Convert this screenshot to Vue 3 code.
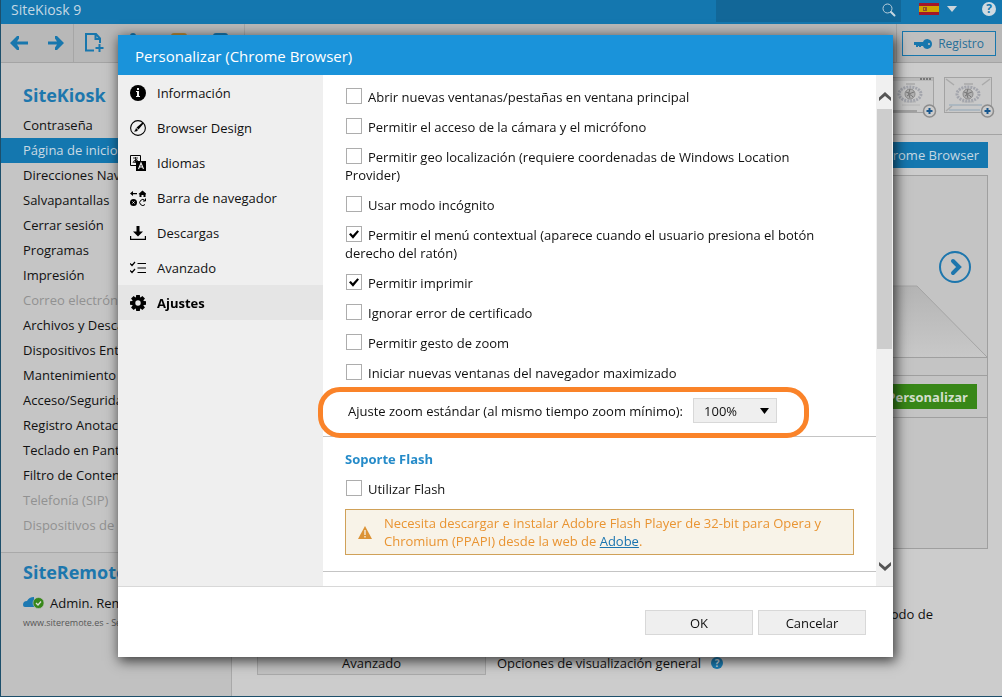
<script setup>
import { ref } from 'vue'

const menu = [
  { label: 'Contraseña' },
  { label: 'Página de inicio', active: true },
  { label: 'Direcciones Navegador' },
  { label: 'Salvapantallas' },
  { label: 'Cerrar sesión' },
  { label: 'Programas' },
  { label: 'Impresión' },
  { label: 'Correo electrónico', disabled: true },
  { label: 'Archivos y Descargas' },
  { label: 'Dispositivos Entrada' },
  { label: 'Mantenimiento' },
  { label: 'Acceso/Seguridad' },
  { label: 'Registro Anotaciones' },
  { label: 'Teclado en Pantalla' },
  { label: 'Filtro de Contenido' },
  { label: 'Telefonía (SIP)', disabled: true },
  { label: 'Dispositivos de pago', disabled: true },
]

const sections = [
  { id: 'info', label: 'Información' },
  { id: 'design', label: 'Browser Design' },
  { id: 'lang', label: 'Idiomas' },
  { id: 'bar', label: 'Barra de navegador' },
  { id: 'down', label: 'Descargas' },
  { id: 'adv', label: 'Avanzado' },
  { id: 'gear', label: 'Ajustes', active: true },
]

const options = ref([
  { label: 'Abrir nuevas ventanas/pestañas en ventana principal', on: false },
  { label: 'Permitir el acceso de la cámara y el micrófono', on: false },
  { label: 'Permitir geo localización (requiere coordenadas de Windows Location Provider)', on: false },
  { label: 'Usar modo incógnito', on: false },
  { label: 'Permitir el menú contextual (aparece cuando el usuario presiona el botón derecho del ratón)', on: true },
  { label: 'Permitir imprimir', on: true },
  { label: 'Ignorar error de certificado', on: false },
  { label: 'Permitir gesto de zoom', on: false },
  { label: 'Iniciar nuevas ventanas del navegador maximizado', on: false },
])
const flash = ref(false)
const zoom = ref('100%')
const teeth = [0, 45, 90, 135, 180, 225, 270, 315]
</script>

<template>
  <div class="app">
    <header class="titlebar">
      <h1>SiteKiosk 9</h1>
      <div class="search">
        <input type="search" aria-label="Buscar" />
        <svg width="14" height="14" viewBox="0 0 14 14"><circle cx="5.500" cy="5.500" r="4.500" fill="none" stroke="#b9cedb" stroke-width="1" /><path d="M9 9l3.500 3.500" stroke="#c5d6e0" stroke-width="2" stroke-linecap="round" /></svg>
      </div>
      <button class="lang" aria-label="Idioma">
        <svg width="20" height="12" viewBox="0 0 20 12"><path fill="#a3172a" d="M0 0h20v12H0z" /><path fill="#cfa500" d="M0 3h20v6H0z" /><path fill="#93502c" d="M4 4h4v4H4z" /><path fill="#cfa500" d="M5 5h1v2H5z" /></svg>
        <svg width="10" height="6" viewBox="0 0 10 6"><path fill="#cdd5da" d="M0 0h10L5 6z" /></svg>
      </button>
      <button class="help" aria-label="Ayuda">?</button>
    </header>

    <div class="toolbar">
      <div class="group nav">
        <button aria-label="Atrás"><svg width="18" height="16" viewBox="0 0 18 16"><path d="M0 8L7 1h2v2.500L7 6.500h11v3H7l2 3V15H7z" fill="#1877ad" /></svg></button>
        <button aria-label="Adelante"><svg width="18" height="16" viewBox="0 0 18 16"><path d="M17 8L10 1H8v2.500l2 3H1v3h9l-2 3V15h2z" fill="#1877ad" /></svg></button>
      </div>
      <div class="group files">
        <button aria-label="Nuevo"><svg width="19" height="20" viewBox="0 0 19 20"><path d="M9 17.500H1V1h10l4 4.500V10M10.500 1v5H15" fill="none" stroke="#1877ad" stroke-width="2" /><path d="M14.500 11v8M10.500 15h8" stroke="#1877ad" stroke-width="2" /></svg></button>
        <button aria-label="Abrir"><svg width="18" height="20" viewBox="0 0 18 20"><path d="M2 3q0-3 3-3 3 0 3 3v9H2z" fill="#1877ad" /></svg></button>
        <button aria-label="Carpeta"><svg width="18" height="20" viewBox="0 0 18 20"><path d="M1 3Q1 0 4 0h10q3 0 3 3v14H1z" fill="#b48a3a" /></svg></button>
        <button aria-label="Guardar"><svg width="18" height="20" viewBox="0 0 18 20"><path d="M1 3Q1 0 4 0h9q3 0 3 3v14H1z" fill="#1877ad" /></svg></button>
      </div>
      <div class="register">
        <button>
          <svg width="18" height="10" viewBox="0 0 18 10"><path d="M0 3h9q1-3 4.500-3Q18 1 18 5t-4.500 5Q10 10 9 7H7v1H5V7H4v1H2V6H0z" fill="#1877ad" /><circle cx="15" cy="5" r="1.100" fill="#bbb" /></svg>
          Registro
        </button>
      </div>
    </div>

    <div class="work">
      <nav class="sidebar">
        <h2>SiteKiosk</h2>
        <a v-for="m in menu" :key="m.label" href="#" :class="{ active: m.active, disabled: m.disabled }">{{ m.label }}</a>
        <section class="remote">
          <h2>SiteRemote</h2>
          <a href="#" class="admin">
            <svg width="21" height="12" viewBox="0 0 21 12"><path d="M0 8q0-4 4-4Q6 0 11 0v10H2Q0 10 0 8z" fill="#1d79b2" /><circle cx="15.500" cy="6" r="5.500" fill="#37871a" stroke="#c2c2c2" stroke-width=".6" /><path d="M13 6l2 2 3-3.500" fill="none" stroke="#ddd" stroke-width="1.300" /></svg>
            Admin. Remota
          </a>
          <small>www.siteremote.es - Servicio</small>
        </section>
      </nav>

      <main class="main">
        <div class="thumbs">
          <button v-for="n in 2" :key="n" :aria-label="'Añadir vista ' + n">
            <svg width="54" height="46" viewBox="0 0 54 46">
              <rect x=".5" y=".5" width="47" height="35" fill="#c9c9c9" stroke="#a3a3a3" />
              <g v-if="n === 1" fill="#777"><path d="M1 1h46v3H1z" fill="#b9b9b9" /><path d="M34 1h2v2h-2zM37 1h2v2h-2zM40 1h2v2h-2zM43 1h2v2h-2z" /><path d="M1 33h30v2H1z" fill="#a0a0a0" /></g>
              <g v-else fill="none"><path d="M2 2l8 6M46 2l-8 6M2 34l6-5" stroke="#aaa" stroke-width="1.500" /><path d="M5 28h33M5 33h31" stroke="#8fa6b8" /></g>
              <path d="M20 7h9" stroke="#999" />
              <path d="M18 25h12M16 28h18" stroke="#b4b4b4" />
              <ellipse cx="24" cy="17" rx="11" ry="7" fill="none" stroke="#a3a5ac" stroke-width="3" stroke-dasharray="2 1" />
              <circle cx="24" cy="17" r="5" fill="#b0b0b0" stroke="#8a8a8a" /><path d="M20 15q4 3 8 0M21 19q3-3 6 1M24 12q-3 5 0 9" fill="none" stroke="#777" />
              <circle cx="43.500" cy="34" r="6" fill="#ccc" stroke="#8c8c8c" stroke-width="1.500" /><path d="M43.500 31v6M40.500 34h6" stroke="#17578e" stroke-width="2" />
            </svg>
          </button>
        </div>
        <div class="content">
          <div class="tabs"><button>Chrome Browser</button></div>
          <div class="panel">
            <div class="preview">
              <svg class="slope" viewBox="0 0 120 72" width="120" height="72">
                <defs><linearGradient id="shade" x2="0" y2="1"><stop stop-color="#b4b4b4" /><stop offset="1" stop-color="#c8c8c8" /></linearGradient></defs>
                <path d="M0 1h50l70 71H0z" fill="url(#shade)" /><path d="M0 1h50l70 71" fill="none" stroke="#a4a4a4" />
              </svg>
              <button class="next" aria-label="Siguiente"><svg width="32" height="32" viewBox="0 0 32 32"><circle cx="16" cy="16" r="15" fill="none" stroke="#1d76ad" stroke-width="2" /><path d="M14 10l6 6-6 6" fill="none" stroke="#1d76ad" stroke-width="4" stroke-linecap="round" /></svg></button>
            </div>
            <div class="strip"></div>
            <div class="action"><button>Personalizar</button></div>
            <div class="blank"></div>
          </div>
          <p class="note">modo de</p>
          <div class="bottom">
            <button>Avanzado</button>
            <span>Opciones de visualización general</span>
            <i>?</i>
          </div>
        </div>
      </main>
    </div>

    <div class="dialog" role="dialog" aria-labelledby="dialog-title">
      <h2 id="dialog-title">Personalizar (Chrome Browser)</h2>
      <div class="body">
        <nav class="sections">
          <a v-for="s in sections" :key="s.id" href="#" :class="{ active: s.active }">
            <svg width="16" height="16" viewBox="0 0 16 16">
              <template v-if="s.id === 'info'">
                <circle cx="8" cy="8" r="8" /><path fill="#efefef" d="M7 3h2v2H7zM6 6h3v5h1v1H6v-1h1V7H6z" />
              </template>
              <template v-else-if="s.id === 'design'">
                <circle cx="8" cy="8" r="7.400" fill="none" stroke="#000" stroke-width="1.100" /><path d="M12.500 2.500l1 1-5 6-2-2zM6 8l2 2q-1 2-4 1.500Q5.500 10.500 6 8z" />
              </template>
              <template v-else-if="s.id === 'lang'">
                <path d="M.5.500h10v10H.5z" fill="none" stroke="#000" /><path d="M3 3h5M5.500 2v6M3 8q0-3 4-3 2 1 0 3M7 4L4 8" fill="none" stroke="#000" stroke-width=".8" /><path d="M6 6h10v10H6z" /><path d="M8.500 14L11 8l2.500 6M9.500 12h3" fill="none" stroke="#efefef" stroke-width="1.100" />
              </template>
              <template v-else-if="s.id === 'bar'">
                <path d="M0 3.500L3 1v2h4v1.200H3V6zM8.500 4L12.500.500 16.500 4l-1 .5V7h-2V5h-2v2h-2V4.500z" /><circle cx="3.500" cy="12.500" r="3.500" /><path d="M2.500 11.500l2 2m0-2l-2 2" stroke="#fff" /><path d="M15 10.500A3 3 0 1 0 15 14.500M15.500 8.500v2.500H13" fill="none" stroke="#000" />
              </template>
              <template v-else-if="s.id === 'down'">
                <path d="M6.500 1h3v5.500h3.500L8 11.500 3 6.500h3.500z" /><path d="M.6 11v3.400h14.800V11" fill="none" stroke="#000" stroke-width="1.200" />
              </template>
              <template v-else-if="s.id === 'adv'">
                <path d="M0 3.500l2 2 3-3.500M0 10.500l2 2L5 9M7.500 3.500H16M7.500 8H16M7.500 12.500H16" fill="none" stroke="#000" stroke-width="1.200" />
              </template>
              <template v-else>
                <path v-for="t in teeth" :key="t" d="M6.200 0h3.600l.5 4H5.700z" :transform="`rotate(${t} 8 8)`" /><circle cx="8" cy="8" r="4.300" fill="none" stroke="#000" stroke-width="3.200" />
              </template>
            </svg>
            {{ s.label }}
          </a>
        </nav>

        <form class="settings">
          <div class="block">
            <label v-for="o in options" :key="o.label" class="check"><input v-model="o.on" type="checkbox" />{{ o.label }}</label>
            <div class="zoom">
              <label for="zoom">Ajuste zoom estándar (al mismo tiempo zoom mínimo):</label>
              <span class="select">
                <select id="zoom" v-model="zoom"><option>100%</option><option>125%</option><option>150%</option></select>
                <svg width="9" height="6" viewBox="0 0 9 6"><path d="M0 0h9L4.500 6z" /></svg>
              </span>
              <span class="highlight"></span>
            </div>
          </div>
          <div class="block flash">
            <h3>Soporte Flash</h3>
            <label class="check"><input v-model="flash" type="checkbox" />Utilizar Flash</label>
            <div class="warning">
              <svg width="14" height="13" viewBox="0 0 14 13"><path d="M7 0l7 13H0z" fill="#dc9336" /><path d="M7 4v5M7 10v1.500" stroke="#f8f3e8" stroke-width="1.300" /></svg>
              <p>Necesita descargar e instalar Adobre Flash Player de 32-bit para Opera y Chromium (PPAPI) desde la web de <a href="#">Adobe</a>.</p>
            </div>
          </div>
        </form>

        <div class="scroll">
          <svg width="12" height="9" viewBox="0 0 12 9"><path d="M0 9V5.500L6 0l6 5.500V9L6 4z" fill="#555" /></svg>
          <span class="thumb"></span>
          <svg width="12" height="9" viewBox="0 0 12 9"><path d="M0 0v3.500L6 9l6-5.500V0L6 5z" fill="#555" /></svg>
        </div>
      </div>
      <footer><button>OK</button><button>Cancelar</button></footer>
    </div>
  </div>
</template>

<style>
html, body { margin: 0; height: 100%; overflow: hidden; }
</style>

<style scoped>
* { box-sizing: border-box; }
h1, h2, h3, p { margin: 0; }
button, input, select { font: inherit; color: inherit; margin: 0; padding: 0; border: 0; background: none; }
a { color: inherit; text-decoration: none; }
svg { display: block; flex: none; }
.app {
  height: 100vh; display: flex; flex-direction: column;
  border-left: 1px solid #1d4f6b; border-bottom: 1px solid #1d4f6b;
  background: #cccccc; color: #111; font: 13px/18px "Open Sans", "Noto Sans", sans-serif;
}

.titlebar { display: flex; align-items: flex-start; flex: none; height: 24px; padding-right: 6px; background: #1477af; color: #c4d8e4; }
.titlebar h1 { flex: 1; padding-left: 10px; font-size: 14px; font-weight: 400; line-height: 20px; }
.search { display: flex; align-items: center; width: 185px; height: 22px; padding: 0 5px 2px 0; background: #126798; }
.search input { flex: 1; min-width: 0; appearance: none; outline: 0; }
.lang { display: flex; align-items: center; gap: 8px; height: 18px; margin-left: 18px; }
.help { width: 14px; height: 14px; margin: 2px 0 0 25px; border-radius: 50%; background: #cfdae1; color: #1477af; font-size: 12px; font-weight: 700; line-height: 14px; }

.toolbar { display: flex; flex: none; height: 39px; background: #b8b8b8; border-bottom: 1px solid #a4a4a4; }
.group { display: flex; align-items: center; border-right: 1px solid #a6a6a6; }
.nav { width: 73px; padding-left: 9px; gap: 19px; }
.files { width: 171px; padding-left: 11px; gap: 24px; }
.register { margin-left: auto; padding: 7px 6px 0 5px; border-left: 1px solid #a4a4a4; }
.register button { display: flex; align-items: center; gap: 6px; height: 25px; padding: 0 11px; border: 1px solid #1877ad; background: #bfbfbf; color: #286f98; font-size: 12px; }

.work { flex: 1; display: flex; min-height: 0; }
.sidebar { flex: none; width: 231px; padding-top: 19px; background: #c5c5c5; border-right: 1px solid #a9a9a9; overflow: hidden; }
.sidebar h2 { padding-left: 22px; color: #1d77ad; font-size: 18px; line-height: 26px; }
.sidebar > h2 { margin-bottom: 5px; }
.sidebar > a { display: block; height: 25px; padding-left: 22px; line-height: 25px; }
.sidebar > a.active { background: #1477af; color: #c9dae4; }
.sidebar > a.disabled { color: #919191; }
.remote { height: 100%; margin-top: 14px; padding-top: 6px; border-top: 1px solid #a9a9a9; background: #c1c1c1; }
.admin { display: flex; align-items: center; gap: 6px; padding: 9px 0 2px 22px; }
.remote small { display: block; padding-left: 22px; color: #565656; font-size: 9px; }

.main { flex: 1; min-width: 0; overflow: hidden; }
.thumbs { display: flex; justify-content: flex-end; gap: 4px; height: 72px; padding: 14px 4px 0 0; border-bottom: 1px solid #a4a4a4; }
.thumbs button { height: 46px; }
.content { padding: 7px 14px 0 25px; }
.tabs { display: flex; justify-content: flex-end; margin-bottom: 7px; }
.tabs button { height: 26px; padding: 0 9px 0 12px; background: #1477af; color: #c5d7e2; }
.panel { border: 1px solid #9f9f9f; background: #c4c4c4; }
.preview { display: flex; align-items: flex-end; justify-content: flex-end; position: relative; height: 182px; border-bottom: 1px solid #9f9f9f; }
.next { position: absolute; right: 16px; top: 75px; }
.strip { height: 18px; border-bottom: 1px solid #9f9f9f; }
.action { display: flex; justify-content: flex-end; height: 42px; padding: 8px 10px 0; border-bottom: 1px solid #9f9f9f; }
.action button { height: 25px; padding: 0 9px; background: #388718; color: #d3dfcd; font-weight: 700; }
.blank { height: 130px; }
.note { margin: 56px 55px 27px 0; text-align: right; }
.bottom { display: flex; align-items: center; }
.bottom button { width: 229px; height: 25px; margin-right: 11px; border: 1px solid #a9a9a9; background: #c1c1c1; }
.bottom i { width: 12px; height: 12px; margin-left: 10px; border-radius: 50%; background: #1a7db4; color: #c9dce7; font-size: 10px; font-style: normal; font-weight: 700; line-height: 12px; text-align: center; }

.dialog {
  position: fixed; top: 35px; right: 109px; bottom: 40px; left: 118px;
  display: flex; flex-direction: column; background: #fff; box-shadow: 2px 3px 12px 1px rgba(0, 0, 0, 0.7);
}
.dialog h2 { flex: none; height: 40px; padding: 0 17px; background: #1a93da; color: #fff; font-size: 15px; font-weight: 400; line-height: 42px; }
.body { flex: 1; display: flex; min-height: 0; border-bottom: 1px solid #d8d8d8; }
.sections { flex: none; width: 205px; background: #efefef; }
.sections a { display: flex; align-items: center; gap: 11px; height: 35px; padding-left: 12px; color: #111; }
.sections a.active { background: #e5e5e5; color: #000; font-weight: 700; }
.settings { flex: 1; min-width: 0; }
.block { padding: 13px 22px 13px; border-bottom: 1px solid #c4c4c4; }
.check { display: block; margin-bottom: 12px; padding-right: 12px; line-height: 18px; }
.check input { appearance: none; width: 16px; height: 16px; margin: 0 6px 0 1px; border: 1px solid #adadad; background: #fff; vertical-align: -2px; }
.check input:checked::after { content: ""; display: block; width: 10px; height: 9px; margin: 3px 2px; background: #000; clip-path: polygon(0 48%, 18% 34%, 38% 58%, 84% 4%, 100% 18%, 40% 96%); }
.zoom { display: flex; align-items: center; gap: 10px; position: relative; margin-top: 16px; padding-left: 3px; }
.select { display: grid; align-items: center; }
.select select { grid-area: 1 / 1; appearance: none; width: 84px; height: 25px; padding-left: 10px; border: 1px solid #d8d8d8; border-radius: 0; background: #efefef; }
.select svg { grid-area: 1 / 1; justify-self: end; margin-right: 8px; pointer-events: none; }
.highlight { position: absolute; inset: -11px 45px -15px -27px; border: 5px solid #fa8329; border-radius: 22px; pointer-events: none; }
.flash { padding-bottom: 16px; }
.flash h3 { margin-bottom: 12px; color: #258bc9; font-size: 13px; line-height: 18px; }
.flash .check { margin-bottom: 11px; }
.warning { display: flex; align-items: center; gap: 12px; padding: 4px 12px; border: 1px solid #d0a158; background: #f8f3e8; color: #e99432; }
.warning a { color: #1b75b0; text-decoration: underline; }
.scroll { display: flex; flex-direction: column; align-items: center; flex: none; width: 17px; padding: 17px 0 15px; background: #f0f0f0; }
.thumb { width: 15px; height: 50%; margin: 8px 0 auto; background: #cdcdcd; }
.dialog footer { display: flex; justify-content: flex-end; gap: 5px; flex: none; padding: 23px 27px 22px; }
.dialog footer button { width: 108px; height: 25px; border: 1px solid #d8d8d8; background: #efefef; }
</style>
